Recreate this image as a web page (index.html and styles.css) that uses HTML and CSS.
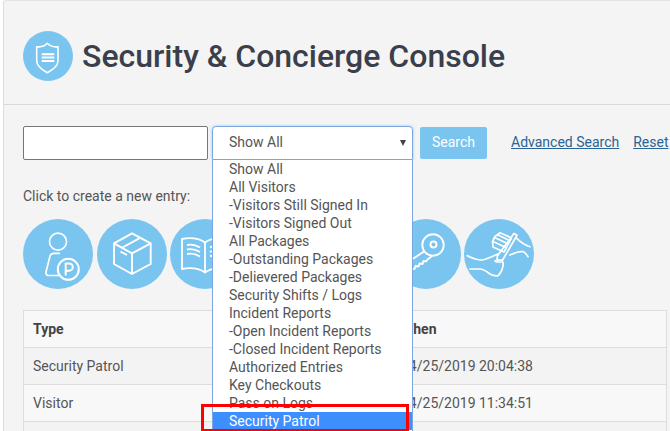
FILE: index.html
```html
<!DOCTYPE html>
<html lang="en">
<head>
<meta charset="utf-8">
<title>Security &amp; Concierge Console</title>
<link rel="stylesheet" href="styles.css">
</head>
<body>
<main class="panel">
  <header class="head">
    <span class="logo">
      <svg viewBox="0 0 50 50" width="50" height="50" fill="none" stroke="#fff" stroke-width="1.600" stroke-linejoin="round">
        <path d="M13.700 15.700c4 .6 7.800-.4 10.600-3.400 3 3 7 4 10.700 3.400v14c0 5.500-5 9-10.700 12-5.600-3-10.600-6.500-10.600-12z"/>
        <path d="M18.700 23.300h12.600M18.700 26.600h12.600M18.700 30h12.600" stroke-width="2"/>
      </svg>
    </span>
    <h1 class="title">Security &amp; Concierge Console</h1>
  </header>

  <section class="body">
    <form class="search">
      <input class="box" type="text" aria-label="Search">
      <div class="select"><span>Show All</span><i class="caret"></i></div>
      <button class="btn" type="button">Search</button>
      <a class="link first" href="#">Advanced Search</a>
      <a class="link" href="#">Reset</a>
    </form>

    <p class="hint">Click to create a new entry:</p>

    <div class="circles">
      <span class="circle">
        <svg viewBox="0 0 70 70" fill="none" stroke="#fff" stroke-width="1.700">
          <circle cx="35" cy="22.700" r="8.500"/>
          <path d="M37 34.300h-6c-2.500 0-4 1.500-4.300 4L23 53c-.3 2 .5 3.500 2.500 3.500H36"/>
          <circle cx="45.300" cy="50.300" r="10.500" stroke-width="2"/>
          <path d="M42.700 56.500V44.500h3.500a3.600 3.600 0 0 1 0 7.200h-3.500" stroke-width="2"/>
        </svg>
      </span>
      <span class="circle">
        <svg viewBox="0 0 70 70" fill="none" stroke="#fff" stroke-width="1.900" stroke-linejoin="round">
          <path d="M35 14.300l18.700 10V45L35 55 17 45V24.300z"/>
          <path d="M17 24.300l18 10 18.700-10M35 34.300V55"/>
          <path d="M42.300 19.300L24.500 29M23.500 32.700l6.500 3.300"/>
        </svg>
      </span>
      <span class="circle">
        <svg viewBox="0 0 70 70" fill="none" stroke="#fff" stroke-width="1.800" stroke-linejoin="round">
          <path d="M12 20c8-1.500 17-.5 23 3.500 6-4 15-5 23-3.500v30c-8-1.500-17-.5-23 3.500-6-4-15-5-23-3.500z"/>
          <path d="M35 23.500v30"/>
          <path d="M17 26c5-1 9 0 13 2.500M17 30.500c5-1 9 0 13 2.500M17 35c5-1 9 0 13 2.500M40 28.500c4-2.500 8-3.500 13-2.500M40 33c4-2.500 8-3.500 13-2.500M40 37.500c4-2.500 8-3.500 13-2.500"/>
        </svg>
      </span>
      <span class="circle"></span>
      <span class="circle"></span>
      <span class="circle">
        <svg viewBox="0 0 70 70" fill="none" stroke="#fff" stroke-width="1.900" stroke-linejoin="round">
          <circle cx="42" cy="26" r="10.700"/>
          <circle cx="42.500" cy="25.500" r="3"/>
          <path d="M33 32.500L14 45M17 53l3-.5 1-3 2.500.5 1-3 3 .5 1-3 3 .5 1-3 2.500.5 1.500-2 4.500-3.500"/>
        </svg>
      </span>
      <span class="circle">
        <svg viewBox="0 0 70 70" fill="none" stroke="#fff" stroke-width="1.700" stroke-linejoin="round" stroke-linecap="round">
          <path d="M36 13.700L47.500 19 40 33l-11-5-.5-5.500 2.500-5z"/>
          <path d="M30.500 18.500l13 6M29 22.500l12.500 5.800M34 16l11.500 5.500"/>
          <path d="M50 14.500l3 1.700-14.500 25-5.500 0 .5-4.500z"/>
          <path d="M52.700 19.300c4 4 8 6.500 13.300 8.400M46 36c5-2.500 9.500-4 13-3.300 2 .5 3.500 2.500 5 5M3.300 36.700c5 2.500 10 4.300 14.400 4.300 4 0 7-2.500 10-3.300l6.300-2.700"/>
          <path d="M31 41.500c0 1 .5 1.500 1.700 1.500H39c.5 3 0 6-1.300 8.500-1 2-2 4-3.700 5.200-3 .5-5.500-.2-8-1.700-3.500-2.500-6-5-10-5H6"/>
        </svg>
      </span>
    </div>

    <table class="log">
      <thead>
        <tr><th class="c-type">Type</th><th class="c-when">When</th></tr>
      </thead>
      <tbody>
        <tr><td>Security Patrol</td><td>04/25/2019 20:04:38</td></tr>
        <tr><td>Visitor</td><td>04/25/2019 11:34:51</td></tr>
        <tr><td>&nbsp;</td><td>&nbsp;</td></tr>
      </tbody>
    </table>

    <ul class="options">
      <li>Show All</li>
      <li>All Visitors</li>
      <li>-Visitors Still Signed In</li>
      <li>-Visitors Signed Out</li>
      <li>All Packages</li>
      <li>-Outstanding Packages</li>
      <li>-Delievered Packages</li>
      <li>Security Shifts / Logs</li>
      <li>Incident Reports</li>
      <li>-Open Incident Reports</li>
      <li>-Closed Incident Reports</li>
      <li>Authorized Entries</li>
      <li>Key Checkouts</li>
      <li>Pass on Logs</li>
      <li class="active">Security Patrol</li>
    </ul>
    <div class="callout"></div>
  </section>
</main>
</body>
</html>
```
FILE: styles.css
```css
html, body {
  margin: 0;
  height: 431px;
  overflow: hidden;
  background: #fff;
}
body {
  font-family: Roboto, "Liberation Sans", sans-serif;
  font-size: 14px;
  color: #555;
}
.panel {
  margin-left: 3px;
  height: 431px;
  box-sizing: border-box;
  background: #f4f4f4;
  border-left: 1px solid #ddd;
  border-top: 1px solid #e4e4e4;
  border-top-left-radius: 3px;
  overflow: hidden;
}
.head {
  display: flex;
  align-items: center;
  gap: 9px;
  height: 104px;
  box-sizing: border-box;
  padding: 6px 0 0 19px;
  border-bottom: 1px solid #d8d8d8;
}
.logo {
  width: 50px;
  height: 50px;
  flex: none;
  border-radius: 50%;
  background: #7ac4f0;
}
.logo svg { display: block; }
.title {
  margin: 0;
  font-size: 32px;
  font-weight: 500;
  color: #3a3f4b;
  white-space: nowrap;
}
.body {
  position: relative;
  padding: 21px 0 0 19px;
}
.search {
  display: flex;
  align-items: center;
  height: 34px;
}
.box {
  width: 185px;
  height: 34px;
  box-sizing: border-box;
  border: 1px solid #767676;
  border-radius: 2px;
  background: #fff;
  padding: 0;
  margin: 0;
}
.select {
  position: relative;
  width: 201px;
  height: 34px;
  box-sizing: border-box;
  margin-left: 4px;
  padding: 0 16px;
  line-height: 30px;
  background: #fff;
  border: 1px solid #7aa7e0;
  border-radius: 4px 4px 0 0;
  box-shadow: 0 0 3px rgba(102, 175, 233, .6);
}
.caret {
  position: absolute;
  right: 6px;
  top: 13px;
  border-left: 3px solid transparent;
  border-right: 3px solid transparent;
  border-top: 6px solid #444;
}
.btn {
  width: 67px;
  height: 32px;
  margin: 0 0 0 7px;
  padding: 0 0 2px;
  border: 0;
  border-radius: 2px;
  background: #7ac4f0;
  color: #fff;
  font: 14px Roboto, sans-serif;
}
.link {
  color: #2a6496;
  text-decoration: underline;
  white-space: nowrap;
  padding-bottom: 2px;
}
.link.first { margin: 0 14px 0 24px; }
.hint {
  margin: 0;
  padding-top: 28px;
  line-height: 17px;
}
.circles {
  display: flex;
  gap: 3.500px;
  margin-top: 14px;
}
.circle {
  width: 70px;
  height: 70px;
  flex: none;
  border-radius: 50%;
  background: #7ac4f0;
}
.circle svg { display: block; width: 70px; height: 70px; }
.log {
  width: 644px;
  margin-top: 21px;
  border-collapse: collapse;
  background: #f8f8f8;
}
.log th, .log td {
  box-sizing: border-box;
  height: 37px;
  padding: 0 9px;
  border: 1px solid #ddd;
  text-align: left;
  color: #555;
  font-weight: 400;
}
.log th { font-weight: 700; color: #444; }
.log tbody tr:nth-child(odd) { background: #f3f3f3; }
.c-type { width: 368px; }
.options {
  position: absolute;
  left: 208px;
  top: 55px;
  width: 201px;
  height: 290px;
  box-sizing: border-box;
  margin: 0;
  padding: 0;
  list-style: none;
  background: #fff;
  border: 1px solid #7aa7e0;
  border-top-width: 0;
  overflow: hidden;
}
.options li {
  height: 18px;
  line-height: 18px;
  padding-left: 16px;
  white-space: nowrap;
}
.options .active {
  background: #3d8eff;
  color: #fff;
}
.callout {
  position: absolute;
  left: 197px;
  top: 299px;
  width: 208px;
  height: 28px;
  box-sizing: border-box;
  border: 3px solid #f00;
}
```
